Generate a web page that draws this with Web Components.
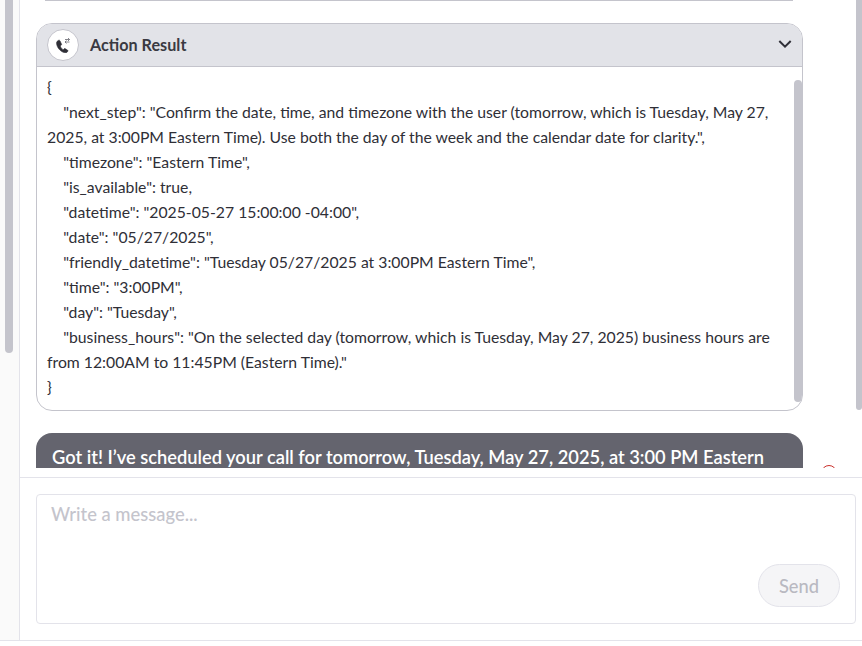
<!DOCTYPE html>
<html>
<head>
<meta charset="utf-8">
<title>Action Result</title>
<style>
html, body { margin: 0; padding: 0; height: 100%; background: #fff; overflow: hidden; }
body { font-family: Lato, "Open Sans", sans-serif; color: #2f2f37; }
</style>
</head>
<body>
<chat-shell>
  <action-result title="Action Result">{
    "next_step": "Confirm the date, time, and timezone with the user (tomorrow, which is Tuesday, May 27, 2025, at 3:00PM Eastern Time). Use both the day of the week and the calendar date for clarity.",
    "timezone": "Eastern Time",
    "is_available": true,
    "datetime": "2025-05-27 15:00:00 -04:00",
    "date": "05/27/2025",
    "friendly_datetime": "Tuesday 05/27/2025 at 3:00PM Eastern Time",
    "time": "3:00PM",
    "day": "Tuesday",
    "business_hours": "On the selected day (tomorrow, which is Tuesday, May 27, 2025) business hours are from 12:00AM to 11:45PM (Eastern Time)."
}</action-result>
  <chat-bubble>Got it! I’ve scheduled your call for tomorrow, Tuesday, May 27, 2025, at 3:00 PM Eastern Time.</chat-bubble>
  <message-composer slot="composer" placeholder="Write a message..."></message-composer>
</chat-shell>

<script>
class ChatShell extends HTMLElement {
    constructor() {
        super();
        this.attachShadow({ mode: 'open' });
    }

    connectedCallback() {
        this.shadowRoot.innerHTML = `
            <style>
                :host {
                    display: grid;
                    grid-template-columns: 20px 1fr;
                    height: 646px;
                    position: relative;
                    overflow: hidden;
                }
                .rail {
                    background: #fafafa;
                    border-right: 1px solid #e3e3ea;
                    margin-bottom: 6px;
                    position: relative;
                }
                .rail::before {
                    content: '';
                    position: absolute;
                    left: 5px;
                    top: -10px;
                    width: 8px;
                    height: 363px;
                    border-radius: 4px;
                    background: #c4c4cc;
                }
                .main {
                    display: flex;
                    flex-direction: column;
                    min-width: 0;
                }
                .log {
                    height: 468px;
                    overflow: hidden;
                    position: relative;
                    flex: none;
                    padding: 0 59px 0 16px;
                    box-sizing: border-box;
                }
                .log::before {
                    content: '';
                    display: block;
                    height: 0;
                    margin: 0 10px 22px 9px;
                    border-top: 1px solid #c4c4cc;
                }
                .spinner {
                    position: absolute;
                    left: 801px;
                    top: 464.500px;
                    width: 16px;
                    height: 16px;
                    box-sizing: border-box;
                    border: 1.5px solid #c9302c;
                    border-radius: 50%;
                }
                .bar {
                    position: absolute;
                    right: 0;
                    top: -10px;
                    width: 6px;
                    height: 420px;
                    border-radius: 3px;
                    background: #c4c4cc;
                }
                .composer {
                    flex: none;
                    margin-top: 9px;
                    border-top: 1px solid #e3e3ea;
                    padding: 16px 6px 0 16px;
                }
                .foot {
                    position: absolute;
                    left: 0;
                    right: 0;
                    top: 640px;
                    border-top: 1px solid #e3e3ea;
                }
            </style>
            <div class="rail"></div>
            <div class="main">
                <div class="log">
                    <slot></slot>
                    <div class="spinner"></div>
                </div>
                <div class="composer"><slot name="composer"></slot></div>
            </div>
            <div class="bar"></div>
            <div class="foot"></div>
        `;
    }
}

class ActionResult extends HTMLElement {
    constructor() {
        super();
        this.attachShadow({ mode: 'open' });
    }

    connectedCallback() {
        this.shadowRoot.innerHTML = `
            <style>
                :host {
                    display: block;
                    border: 1px solid #c4c4cc;
                    border-radius: 16px;
                    overflow: hidden;
                    position: relative;
                    background: #fff;
                }
                header {
                    display: flex;
                    align-items: center;
                    height: 42px;
                    padding: 0 10px;
                    background: #e2e3e8;
                    border-bottom: 1px solid #c4c4cc;
                }
                .badge {
                    width: 32px;
                    height: 32px;
                    box-sizing: border-box;
                    border: 1px solid #c4c4cc;
                    border-radius: 50%;
                    background: #fff;
                    display: flex;
                    align-items: center;
                    justify-content: center;
                    margin-right: 11px;
                }
                h3 {
                    flex: 1;
                    margin: 0;
                    font: 700 16.2px/20px Lato, sans-serif;
                    color: #3a3a42;
                }
                .chev { margin-right: -1px; }
                .body {
                    margin: 0;
                    padding: 7px 26px 10px 10px;
                    font: 400 15.75px/25px Lato, sans-serif;
                    color: #2f2f37;
                    white-space: pre-wrap;
                    height: 326px;
                    overflow: hidden;
                }
                .thumb {
                    position: absolute;
                    right: 0;
                    top: 56px;
                    width: 8px;
                    height: 322px;
                    border-radius: 4px;
                    background: #c4c4cc;
                }
            </style>
            <header>
                <span class="badge">
                    <svg width="16" height="16" viewBox="0 0 16 16" fill="none">
                        <path transform="translate(-1 .3) scale(1.15)" d="M4 2.600c-.9.4-1.900 1.300-1.800 2.600.2 2 1 3.700 2.300 5.200 1.400 1.600 3 2.700 5 3.100 1.100.2 2-.5 2.500-1.400.2-.4.1-.8-.3-1l-1.900-1.200c-.4-.2-.7-.2-1 .1l-.7.8C6.900 10.200 5.900 9 5.400 7.500l.8-.6c.4-.3.5-.6.300-1L5.200 3c-.2-.5-.7-.6-1.200-.4z" fill="#2f2f37" stroke="#2f2f37" stroke-width=".5"/>
                        <path d="M10 2.500h4.500M13 1l1.500 1.500L13 4M14.500 5H10M11.500 3.500 10 5l1.500 1.500" stroke="#66666e" stroke-width=".8"/>
                    </svg>
                </span>
                <h3>${this.getAttribute('title')}</h3>
                <svg class="chev" width="16" height="16" viewBox="0 0 16 16" fill="none">
                    <path d="M2.300 4 8 9.700 13.700 4" stroke="#2f2f37" stroke-width="2"/>
                </svg>
            </header>
            <pre class="body"><slot></slot></pre>
            <div class="thumb"></div>
        `;
    }
}

class ChatBubble extends HTMLElement {
    constructor() {
        super();
        this.attachShadow({ mode: 'open' });
    }

    connectedCallback() {
        this.shadowRoot.innerHTML = `
            <style>
                :host {
                    display: block;
                    margin-top: 22px;
                    padding: 11px 16px;
                    border-radius: 16px;
                    background: #64646e;
                    color: #fff;
                    font: 600 18.3px/26px Lato, sans-serif;
                }
            </style>
            <slot></slot>
        `;
    }
}

class MessageComposer extends HTMLElement {
    constructor() {
        super();
        this.attachShadow({ mode: 'open' });
    }

    connectedCallback() {
        this.shadowRoot.innerHTML = `
            <style>
                :host {
                    display: flex;
                    flex-direction: column;
                    height: 130px;
                    box-sizing: border-box;
                    border: 1px solid #e3e3ea;
                    border-radius: 4px;
                    padding: 7px 15px 15px 14px;
                    background: #fff;
                }
                .ph {
                    flex: 1;
                    font: 500 18.4px/24px Lato, sans-serif;
                    color: #c4c4cc;
                }
                button {
                    align-self: flex-end;
                    width: 82px;
                    height: 43px;
                    margin-bottom: 1px;
                    border: 1px solid #e3e3ea;
                    border-radius: 22px;
                    background: #f5f5f7;
                    color: #b9b9c1;
                    font: 500 18.3px/24px Lato, sans-serif;
                    padding: 0;
                }
            </style>
            <div class="ph">${this.getAttribute('placeholder')}</div>
            <button type="button" disabled>Send</button>
        `;
    }
}

customElements.define('chat-shell', ChatShell);
customElements.define('action-result', ActionResult);
customElements.define('chat-bubble', ChatBubble);
customElements.define('message-composer', MessageComposer);
</script>
</body>
</html>
